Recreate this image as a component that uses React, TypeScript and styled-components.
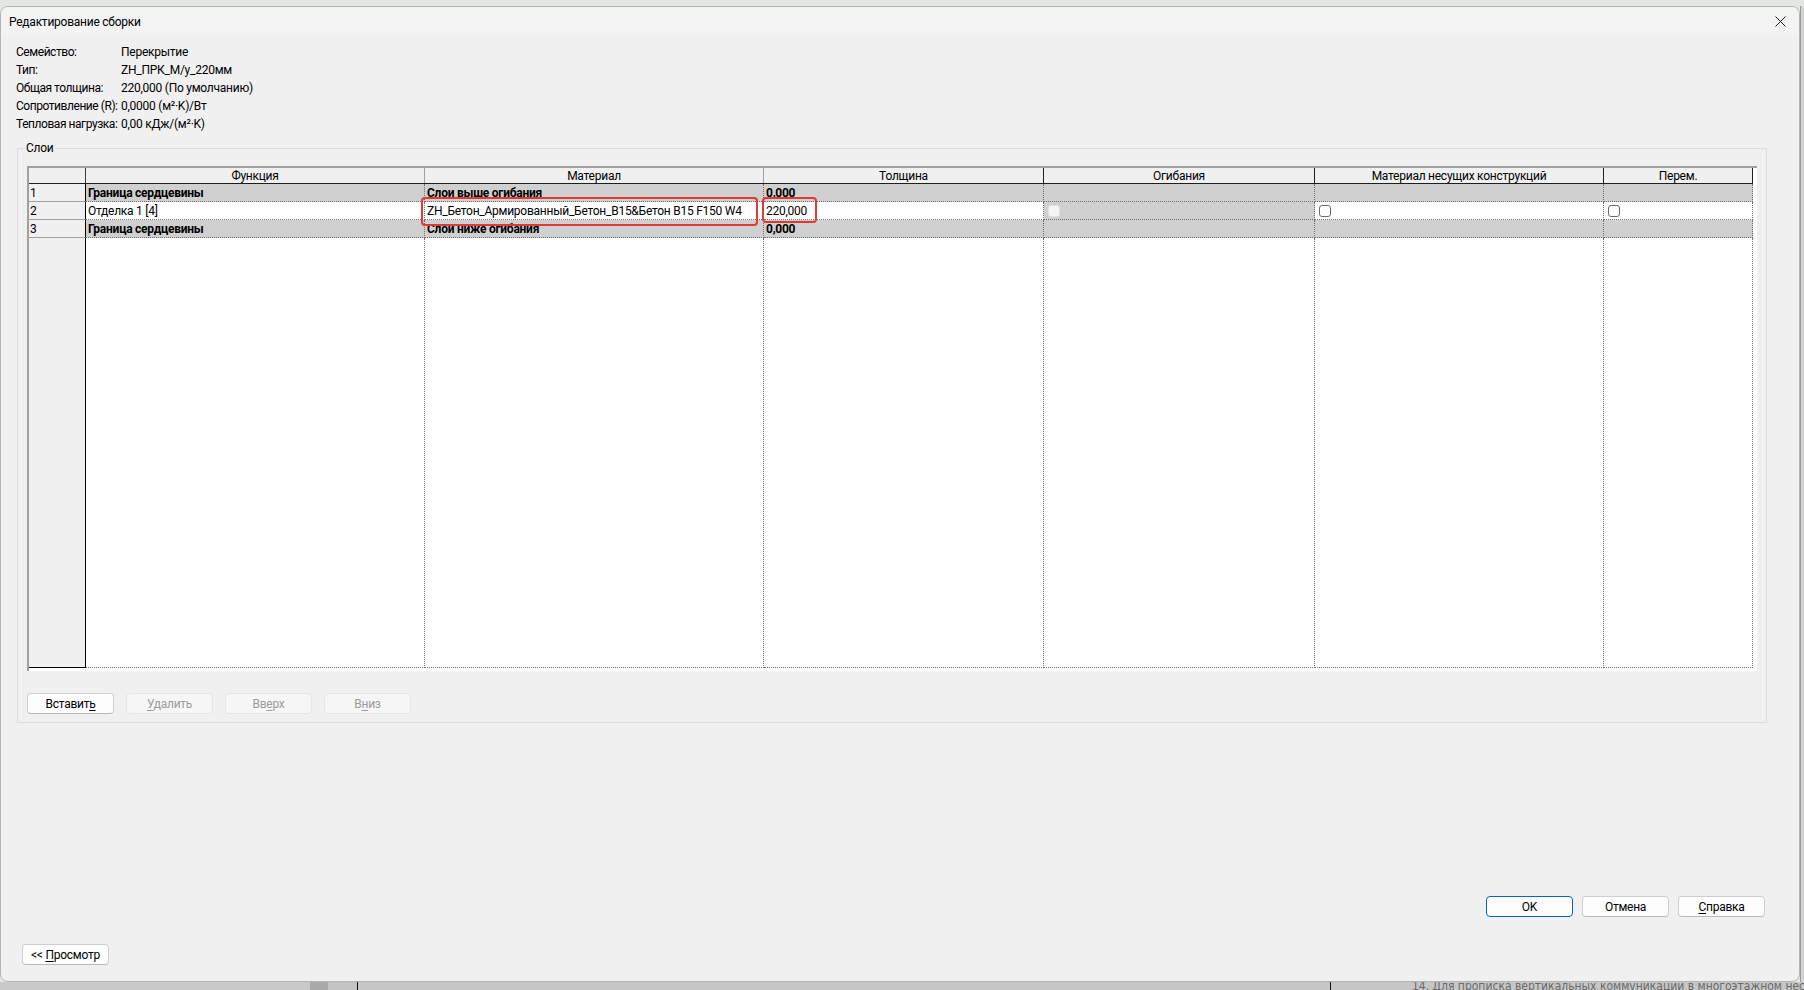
import styled, { createGlobalStyle } from 'styled-components';

const GlobalStyle = createGlobalStyle`
    * { box-sizing: border-box; }
    body {
        margin: 0;
        background: #e4e6e4;
        font-family: Roboto, "Noto Sans", sans-serif;
        font-size: 12px;
        letter-spacing: -0.25px;
        color: #000;
    }
`;

const Screen = styled.div`
    width: 1804px;
    height: 990px;
    padding-top: 6px;
    display: flex;
    flex-direction: column;
    overflow: hidden;
    background: #e4e6e4;
`;

const Stage = styled.div`
    display: flex;
    height: 976px;
`;

const Dialog = styled.div`
    width: 1800px;
    display: flex;
    flex-direction: column;
    background: #f0f0f0;
    border: 1px solid #b4b4b4;
    border-radius: 8px;
    overflow: hidden;
`;

const SideStrip = styled.div`
    flex: 1;
    background: #d2d2d2;
    border-left: 1px solid #9a9a9a;
`;

const BottomStrip = styled.div`
    flex: 1;
    display: flex;
    align-items: flex-start;
    background: #c6c6c6;
    overflow: hidden;
`;

const StripBlock = styled.div<{ $w: number; $shade: string }>`
    flex-shrink: 0;
    width: ${(p) => p.$w}px;
    height: 100%;
    background: ${(p) => p.$shade};
`;

const StripText = styled.div`
    margin-left: 81px;
    font-family: "DejaVu Sans Condensed", "DejaVu Sans", sans-serif;
    font-size: 12px;
    line-height: 8px;
    letter-spacing: 0;
    color: #6a6a6a;
    white-space: nowrap;
`;

const TitleBar = styled.div`
    height: 29px;
    display: flex;
    align-items: center;
    justify-content: space-between;
    padding: 0 9px 0 8px;
    background: #f3f3f3;
`;

const Title = styled.span`
    font-size: 12px;
`;

const CloseButton = styled.button`
    width: 20px;
    height: 20px;
    display: flex;
    align-items: center;
    justify-content: center;
    padding: 0;
    border: none;
    background: transparent;
`;

const Body = styled.div`
    flex: 1;
    display: flex;
    flex-direction: column;
    padding-top: 7px;
`;

const InfoGrid = styled.div`
    display: grid;
    grid-template-columns: 105px auto;
    grid-auto-rows: 18px;
    align-items: center;
    padding-left: 15px;
    white-space: nowrap;
`;

const InfoLabel = styled.span`
    letter-spacing: -0.45px;
`;

const GroupBox = styled.fieldset`
    margin: 7px 32px 0 16px;
    padding: 10px 10px 8px 9px;
    border: 1px solid #dcdcdc;
    min-width: 0;
`;

const GroupLegend = styled.legend`
    margin-left: -2px;
    padding: 0 1px;
    line-height: 16px;
`;

const cols = '57px 339px 339px 280px 271px 289px 149px';

const Table = styled.div`
    width: 1730px;
    height: 505px;
    display: flex;
    flex-direction: column;
    padding: 0 4px 3px 0;
    background: #fff;
    border-top: 2px solid #a0a0a0;
    border-left: 2px solid #a0a0a0;
`;

const HeadRow = styled.div`
    display: grid;
    grid-template-columns: ${cols};
    height: 16px;
    background: #f0f0f0;
    border-bottom: 1px solid #1e1e1e;
`;

const HeadCell = styled.div<{ $edge?: string }>`
    display: flex;
    align-items: center;
    justify-content: center;
    border-right: 1px solid ${(p) => p.$edge || '#1e1e1e'};
    white-space: nowrap;
`;

const Row = styled.div`
    display: grid;
    grid-template-columns: ${cols};
    height: 18px;
`;

const RowHead = styled.div<{ $last?: boolean }>`
    display: flex;
    align-items: center;
    padding-left: 1px;
    background: #f0f0f0;
    border-right: 1px solid #000;
    border-bottom: 1px solid ${(p) => (p.$last ? '#000' : '#a0a0a0')};
`;

const Cell = styled.div<{ $core?: boolean; $bold?: boolean }>`
    position: relative;
    display: flex;
    align-items: center;
    padding: 1px 0 0 2px;
    background: ${(p) => (p.$core ? '#d0d0d0' : '#fff')};
    font-weight: ${(p) => (p.$bold ? 700 : 400)};
    border-right: 1px dotted #6e6e6e;
    border-bottom: 1px dotted #6e6e6e;
    white-space: nowrap;
`;

const FillerRow = styled(Row)`
    height: 430px;
`;

const Mark = styled.div<{ $l: number; $w: number; $h: number }>`
    position: absolute;
    z-index: 2;
    left: ${(p) => p.$l}px;
    top: -5px;
    width: ${(p) => p.$w}px;
    height: ${(p) => p.$h}px;
    border: 2px solid #e23a33;
    border-radius: 4px;
`;

const CheckBox = styled.span<{ $off?: boolean }>`
    width: 12px;
    height: 12px;
    margin-left: 2px;
    border-radius: 3px;
    background: ${(p) => (p.$off ? '#f4f4f4' : '#fff')};
    border: 1px solid ${(p) => (p.$off ? '#e2e2e2' : '#6a6a6a')};
`;

const ButtonBar = styled.div`
    display: flex;
    gap: 12px;
    margin-top: 22px;
`;

const Button = styled.button<{ $off?: boolean; $main?: boolean }>`
    width: 87px;
    height: 21px;
    padding: 0;
    font-family: inherit;
    font-size: 12px;
    letter-spacing: inherit;
    color: ${(p) => (p.$off ? '#9c9c9c' : '#000')};
    background: ${(p) => (p.$off ? '#f6f6f6' : '#fdfdfd')};
    border: 1px solid ${(p) => (p.$main ? '#0067c0' : p.$off ? '#e6e6e6' : '#cfcfcf')};
    border-bottom-color: ${(p) => (p.$main ? '#0067c0' : p.$off ? '#e6e6e6' : '#b8b8b8')};
    border-radius: 4px;
    u { text-underline-offset: 2px; }
`;

const Footer = styled.div`
    display: flex;
    justify-content: flex-end;
    gap: 9px;
    margin-top: auto;
    padding-right: 34px;
`;

const PreviewBar = styled.div`
    display: flex;
    padding: 27px 0 16px 21px;
`;

type Layer = {
    num: number;
    func: string;
    material: string;
    thickness: string;
    core: boolean;
};

const layers: Layer[] = [
    { num: 1, func: 'Граница сердцевины', material: 'Слои выше огибания', thickness: '0,000', core: true },
    { num: 2, func: 'Отделка 1 [4]', material: 'ZH_Бетон_Армированный_Бетон_B15&Бетон B15 F150 W4', thickness: '220,000', core: false },
    { num: 3, func: 'Граница сердцевины', material: 'Слои ниже огибания', thickness: '0,000', core: true },
];

const info = [
    ['Семейство:', 'Перекрытие'],
    ['Тип:', 'ZH_ПРК_М/у_220мм'],
    ['Общая толщина:', '220,000 (По умолчанию)'],
    ['Сопротивление (R):', '0,0000 (м²·K)/Вт'],
    ['Тепловая нагрузка:', '0,00 кДж/(м²·K)'],
];

function App() {
    return (
        <>
            <GlobalStyle />
            <Screen>
                <Stage>
                    <Dialog>
                        <TitleBar>
                            <Title>Редактирование сборки</Title>
                            <CloseButton>
                                <svg width="11" height="11" viewBox="0 0 11 11">
                                    <path d="M0.5 0.5 L10.5 10.5 M10.5 0.5 L0.5 10.5" stroke="#1a1a1a" strokeWidth="1" />
                                </svg>
                            </CloseButton>
                        </TitleBar>
                        <Body>
                            <InfoGrid>
                                {info.map(([label, value]) => (
                                    <>
                                        <InfoLabel key={label}>{label}</InfoLabel>
                                        <span key={value}>{value}</span>
                                    </>
                                ))}
                            </InfoGrid>
                            <GroupBox>
                                <GroupLegend>Слои</GroupLegend>
                                <Table>
                                    <HeadRow>
                                        <HeadCell $edge="#3c3c3c" />
                                        <HeadCell $edge="#a0a0a0">Функция</HeadCell>
                                        <HeadCell $edge="#a0a0a0">Материал</HeadCell>
                                        <HeadCell>Толщина</HeadCell>
                                        <HeadCell>Огибания</HeadCell>
                                        <HeadCell>Материал несущих конструкций</HeadCell>
                                        <HeadCell>Перем.</HeadCell>
                                    </HeadRow>
                                    {layers.map((layer) => (
                                        <Row key={layer.num}>
                                            <RowHead>{layer.num}</RowHead>
                                            <Cell $core={layer.core} $bold={layer.core}>{layer.func}</Cell>
                                            <Cell $core={layer.core} $bold={layer.core}>
                                                {layer.material}
                                                {!layer.core && <Mark $l={-4} $w={337} $h={29} />}
                                            </Cell>
                                            <Cell $core={layer.core} $bold={layer.core}>
                                                {layer.thickness}
                                                {!layer.core && <Mark $l={-2} $w={55} $h={26} />}
                                            </Cell>
                                            <Cell $core>{!layer.core && <CheckBox $off />}</Cell>
                                            <Cell $core={layer.core}>{!layer.core && <CheckBox />}</Cell>
                                            <Cell $core={layer.core}>{!layer.core && <CheckBox />}</Cell>
                                        </Row>
                                    ))}
                                    <FillerRow>
                                        <RowHead $last />
                                        <Cell />
                                        <Cell />
                                        <Cell />
                                        <Cell />
                                        <Cell />
                                        <Cell />
                                    </FillerRow>
                                </Table>
                                <ButtonBar>
                                    <Button>Вставит<u>ь</u></Button>
                                    <Button $off><u>У</u>далить</Button>
                                    <Button $off>Вв<u>е</u>рх</Button>
                                    <Button $off>В<u>н</u>из</Button>
                                </ButtonBar>
                            </GroupBox>
                            <Footer>
                                <Button $main>OK</Button>
                                <Button>Отмена</Button>
                                <Button><u>С</u>правка</Button>
                            </Footer>
                            <PreviewBar>
                                <Button>&lt;&lt; <u>П</u>росмотр</Button>
                            </PreviewBar>
                        </Body>
                    </Dialog>
                    <SideStrip />
                </Stage>
                <BottomStrip>
                    <StripBlock $w={310} $shade="#c9c9c9" />
                    <StripBlock $w={18} $shade="#a9a9a9" />
                    <StripBlock $w={29} $shade="#c3c3c3" />
                    <StripBlock $w={1} $shade="#111" />
                    <StripBlock $w={972} $shade="#c6c6c6" />
                    <StripBlock $w={1} $shade="#111" />
                    <StripText>14. Для прописка вертикальных коммуникаций в многоэтажном нестиле д</StripText>
                </BottomStrip>
            </Screen>
        </>
    );
}

export default App;
